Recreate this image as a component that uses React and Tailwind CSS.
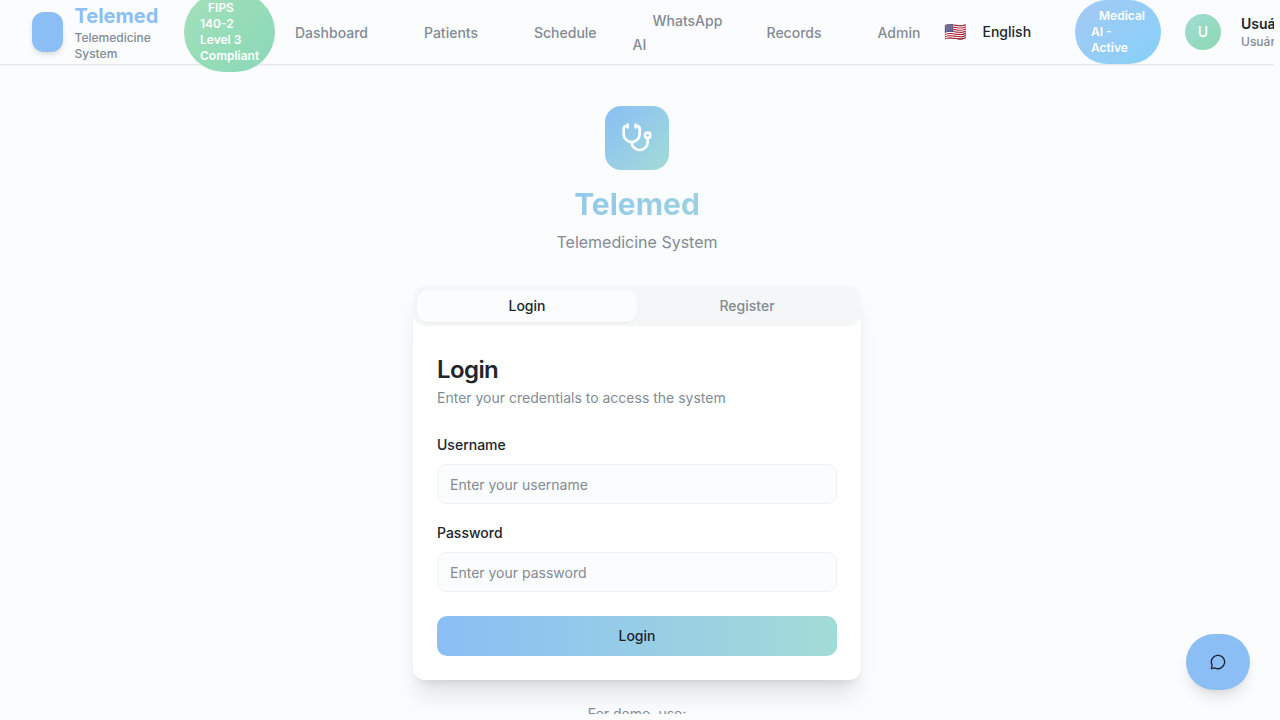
import React from "react";
import { Stethoscope, MessageCircle } from "lucide-react";

function NavItem({ className, children }) {
  return (
    <a className={`shrink-0 pt-0.5 text-sm leading-6 font-medium text-[#828b95] ${className}`}>
      {children}
    </a>
  );
}

function Header() {
  return (
    <header className="h-[65px] w-full shrink-0 border-b border-[#e6e8eb] bg-[#fbfcfe] shadow-xs">
      <div className="flex h-16 w-[1400px] items-center pl-8">
        <div className="h-10 w-[31px] shrink-0 rounded-xl bg-[#8abef5] shadow-md" />
        <div className="ml-[11.5px] w-[109.5px] shrink-0">
          <div className="text-xl leading-7 font-bold text-[#8abef5]">Telemed</div>
          <div className="w-20 text-xs leading-4 font-medium text-[#828b95]">Telemedicine System</div>
        </div>
        <div className="w-[91px] shrink-0 rounded-full bg-linear-135 from-[#a3e0b8] to-[#89d8b9] px-4 py-2 text-xs leading-4 font-semibold whitespace-nowrap text-white">
          <div className="pl-2">FIPS</div>
          <div>140-2</div>
          <div>Level 3</div>
          <div>Compliant</div>
        </div>
        <NavItem className="ml-5 w-[129px]">Dashboard</NavItem>
        <NavItem className="w-[110px]">Patients</NavItem>
        <NavItem className="w-[98.5px]">Schedule</NavItem>
        <NavItem className="w-[90px] mr-[44px] indent-5">
          WhatsApp
          <br />
          <span className="block indent-0">AI</span>
        </NavItem>
        <NavItem className="w-[111px]">Records</NavItem>
        <NavItem className="w-[66.5px]">Admin</NavItem>
        <span className="w-[38.5px] shrink-0 text-lg leading-7">🇺🇸</span>
        <span className="w-[92.5px] shrink-0 text-sm font-medium text-[#20252b]">English</span>
        <div className="w-[86px] shrink-0 rounded-full bg-linear-135 from-[#a3c9f5] to-[#85d0f8] px-4 py-2 text-xs leading-4 font-semibold whitespace-nowrap text-white">
          <div className="pl-2">Medical</div>
          <div>AI -</div>
          <div>Active</div>
        </div>
        <div className="ml-6 flex size-9 shrink-0 items-center justify-center rounded-full bg-linear-135 from-[#a3dbd6] to-[#8ad9ae] text-sm font-medium text-white">
          U
        </div>
        <div className="ml-5 shrink-0 whitespace-nowrap">
          <div className="text-sm leading-5 font-semibold text-[#20252b]">Usuário</div>
          <div className="text-xs leading-4 font-medium text-[#828b95]">Usuário</div>
        </div>
      </div>
    </header>
  );
}

function Field({ label, type, placeholder }) {
  return (
    <label className="flex flex-col gap-[9px]">
      <span className="text-sm leading-5 font-medium text-[#20252b]">{label}</span>
      <input
        type={type}
        placeholder={placeholder}
        className="h-10 w-full rounded-[10px] border border-[#eff1f3] bg-[#fbfcfe] px-3 py-2 text-sm placeholder:text-[#828b95]"
      />
    </label>
  );
}

function LoginCard() {
  return (
    <section className="h-[394px] w-full shrink-0 rounded-xl bg-white shadow-xl">
      <div className="grid h-10 grid-cols-2 rounded-xl bg-[#f5f6f8] p-1 text-center text-sm font-medium">
        <button className="rounded-[10px] bg-[#fbfcfe] text-[#20252b] shadow-xs">Login</button>
        <button className="text-[#828b95]">Register</button>
      </div>
      <div className="px-6 pt-8">
        <h2 className="text-2xl leading-6 font-semibold tracking-tight text-[#20252b]">Login</h2>
        <p className="mt-1.5 text-sm leading-5 text-[#828b95]">
          Enter your credentials to access the system
        </p>
        <form className="mt-[27px] flex flex-col">
          <Field label="Username" type="text" placeholder="Enter your username" />
          <div className="h-[19px]" />
          <Field label="Password" type="password" placeholder="Enter your password" />
          <button
            type="button"
            className="mt-6 h-10 rounded-[10px] bg-linear-to-r from-[#8abef5] to-[#a3dbd6] text-sm font-medium text-[#20252b]"
          >
            Login
          </button>
        </form>
      </div>
    </section>
  );
}

export default function App() {
  return (
    <div className="h-[720px] w-[1280px] overflow-hidden bg-[#fbfcfe] font-[Inter,sans-serif]">
      <div className="relative flex h-[714px] w-[1274px] flex-col overflow-hidden">
        <Header />
        <main className="mx-auto flex w-[448px] flex-col items-center pt-[41px]">
          <div className="flex size-16 shrink-0 items-center justify-center rounded-2xl bg-linear-135 from-[#8abef5] to-[#a3dbd6]">
            <Stethoscope className="size-8 text-white" />
          </div>
          <h1 className="mt-4 w-full bg-linear-to-r from-[#8abef5] to-[#a3dbd6] bg-clip-text text-center text-3xl leading-9 font-bold text-transparent">
            Telemed
          </h1>
          <p className="mt-2 mb-8 text-base leading-6 text-[#828b95]">Telemedicine System</p>
          <LoginCard />
          <p className="mt-6 text-sm leading-5 text-[#828b95]">For demo, use:</p>
        </main>
        <button className="absolute top-[634px] left-[1186px] flex h-14 w-16 items-center justify-center rounded-full bg-[#8abef5] text-[#20252b] shadow-lg">
          <MessageCircle className="size-4" />
        </button>
      </div>
    </div>
  );
}
